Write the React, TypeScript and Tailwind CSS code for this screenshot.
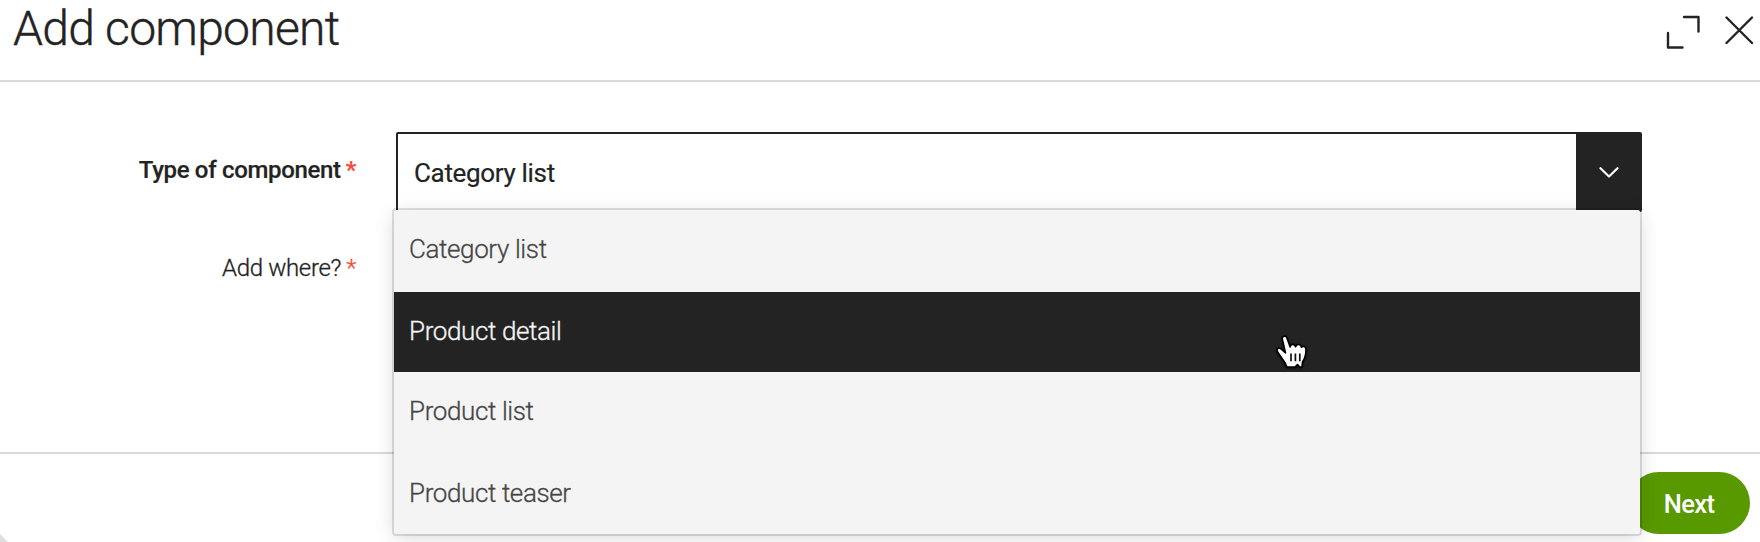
const options = ["Category list", "Product detail", "Product list", "Product teaser"];

function ExpandIcon() {
  return (
    <svg width="36" height="36" viewBox="0 0 36 36" fill="none" stroke="#232323" strokeWidth="2.4" strokeLinecap="round" strokeLinejoin="round">
      <path d="M18 3H32.5V17.5" />
      <path d="M2 19V33.5H16.5" />
    </svg>
  );
}

function CloseIcon() {
  return (
    <svg width="30" height="30" viewBox="0 0 30 30" fill="none" stroke="#232323" strokeWidth="2.4" strokeLinecap="round">
      <path d="M2.5 3.5L28 29M28 3.5L2.5 29" />
    </svg>
  );
}

function HandCursor() {
  return (
    <svg width="36" height="38" viewBox="0 0 36 38" className="absolute left-[881px] top-[42px] drop-shadow-[0_1px_1px_rgba(0,0,0,0.6)]">
      <path
        d="M11.3 31.8C11 30 9.5 27.6 7.8 25.4C6 23 4.2 20.3 2.5 17.8C1 15.2 3.6 13 6 15L10.5 18.8L7.3 5.3C6.6 2 11 .8 12 4.2L15.2 13C15 9.8 19.6 9.3 20.6 12.7C21.5 9.6 25.7 9.8 26.5 13.2C27.6 11.6 30.8 12.4 31 15.5C31 20.5 29.6 25 27.5 28L27 33L24.7 33L22.5 30.5L20 33H12Z"
        fill="#fff"
        stroke="#000"
        strokeWidth="1.6"
        strokeLinejoin="round"
      />
      <path d="M16 19.5V27.3M20.4 19.5V27.3M24.8 19.5V27.3" stroke="#111" strokeWidth="1.7" />
    </svg>
  );
}

export default function App() {
  return (
    <div className="flex h-[542px] w-[1760px] flex-col overflow-hidden bg-white font-['Roboto',sans-serif] text-[#232323]">
      <header className="flex h-[82px] shrink-0 justify-between border-b-2 border-[#dadada] pl-[13px] pr-[6px]">
        <h1 className="pt-px text-[48px] font-light leading-[56px] tracking-[-0.73px] [-webkit-text-stroke:0.4px]">Add component</h1>
        <div className="flex items-start gap-[22px] pt-[14px]">
          <ExpandIcon />
          <CloseIcon />
        </div>
      </header>

      <main className="flex h-[370px] shrink-0 pt-[50px]">
        <div className="flex w-[356px] flex-col items-end gap-[70px] pt-[24px] text-[24px] leading-[28px] tracking-[-0.33px]">
          <label className="flex gap-[5px] font-medium [-webkit-text-stroke:0.2px]">
            <span>Type of component</span>
            <span className="text-[#f24b3c]">*</span>
          </label>
          <label className="flex gap-[5px] font-light [-webkit-text-stroke:0.3px]">
            <span>Add where?</span>
            <span className="text-[#f24b3c]">*</span>
          </label>
        </div>
        <div className="relative ml-[40px] h-[80px] w-[1246px]">
          <div className="flex h-full rounded-[2px] border-2 border-[#232323]">
            <div className="flex-1 pl-[16px] pt-[24px] text-[26px] leading-[30px] tracking-[-0.33px] [-webkit-text-stroke:0.2px]">Category list</div>
            <div className="flex w-[64px] justify-center bg-[#232323] pl-px pt-[33px]">
              <svg width="22" height="14" viewBox="0 0 22 14" fill="none" stroke="#fff" strokeWidth="2.2" strokeLinecap="round" strokeLinejoin="round">
                <path d="M2.5 1.2L11 9.5L19.5 1.2" />
              </svg>
            </div>
          </div>
          <ul className="absolute left-[-2px] top-[78px] z-10 h-[324px] w-[1246px] rounded-[2px] bg-[#f4f4f4] text-[26px] font-light leading-[30px] tracking-[-0.38px] text-[#464646] [-webkit-text-stroke:0.3px] shadow-[0_0_0_2px_rgba(0,0,0,0.12),0_4px_20px_rgba(0,0,0,0.15)]">
            {options.map((option) =>
              option === "Product detail" ? (
                <li key={option} className="relative h-[80px] bg-[#232323] pl-[15px] pt-[24px] text-[#f4f4f4]">
                  {option}
                  <HandCursor />
                </li>
              ) : (
                <li key={option} className="h-[82px] pl-[15px] pt-[24px]">{option}</li>
              ),
            )}
          </ul>
        </div>
      </main>

      <footer className="relative flex h-[90px] shrink-0 justify-end border-t-2 border-[#dadada] pr-[10px] pt-[18px]">
        <button className="h-[62px] w-[122px] rounded-full bg-[#589900] pt-[2px] text-[25.5px] font-medium tracking-[-0.6px] text-white">Next</button>
        <svg width="8" height="8" viewBox="0 0 8 8" className="absolute bottom-0 left-0">
          <path d="M0 0L8 8H0Z" fill="#dedede" />
        </svg>
      </footer>
    </div>
  );
}
